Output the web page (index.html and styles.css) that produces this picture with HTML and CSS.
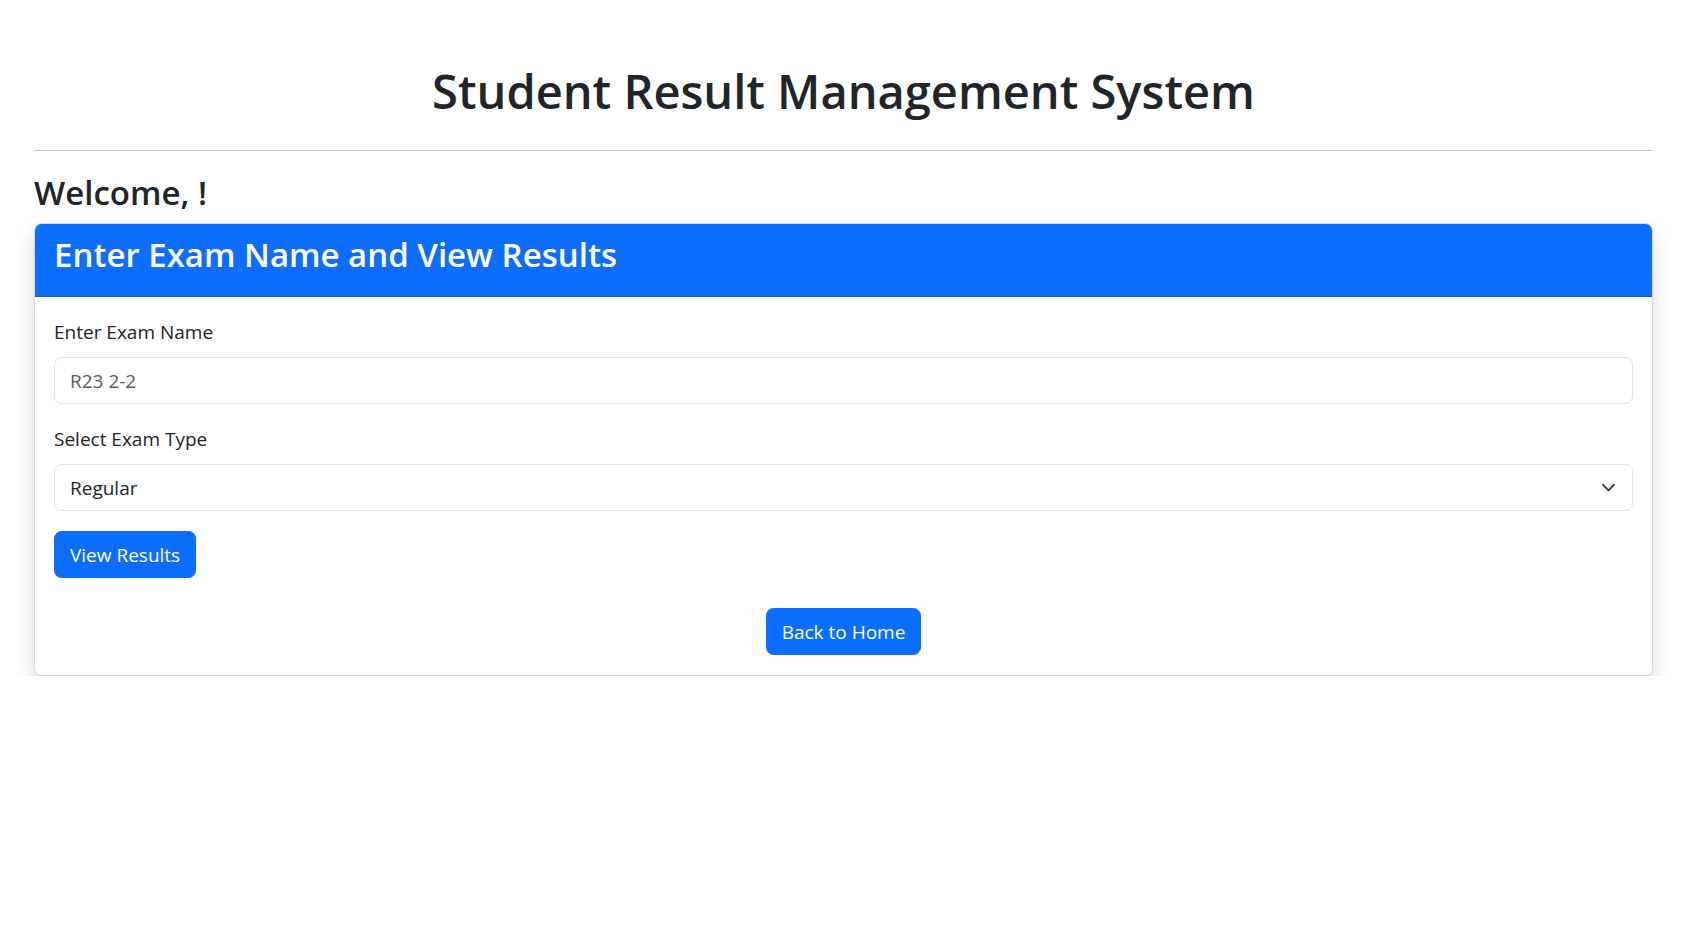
FILE: index.html
```html
<!DOCTYPE html>
<html lang="en">
<head>
<meta charset="utf-8">
<title>Student Result Management System</title>
<link rel="stylesheet" href="styles.css">
</head>
<body>
<div class="container">
  <h1 class="title">Student Result Management System</h1>
  <hr class="divider">
  <h3 class="welcome">Welcome, !</h3>
  <div class="card">
    <div class="card-header">
      <h3 class="card-title">Enter Exam Name and View Results</h3>
    </div>
    <div class="card-body">
      <form class="exam-form">
        <div class="field">
          <label class="form-label" for="exam">Enter Exam Name</label>
          <input class="form-control" id="exam" type="text" placeholder="R23 2-2">
        </div>
        <div class="field">
          <label class="form-label" for="type">Select Exam Type</label>
          <div class="select-wrap">
            <select class="form-select" id="type">
              <option>Regular</option>
              <option>Supplementary</option>
            </select>
            <svg class="chevron" viewBox="0 0 16 16" width="15" height="15" aria-hidden="true"><path d="m2 5 6 6 6-6" fill="none" stroke="#343a40" stroke-width="2" stroke-linecap="round" stroke-linejoin="round"/></svg>
          </div>
        </div>
        <div class="actions-left">
          <button type="button" class="btn">View Results</button>
        </div>
      </form>
      <div class="actions-center">
        <button type="button" class="btn">Back to Home</button>
      </div>
    </div>
  </div>
</div>
</body>
</html>
```

FILE: styles.css
```css
* { box-sizing: border-box; }
html, body { margin: 0; padding: 0; background: #fff; }
body {
  font-family: "Open Sans", "Noto Sans", sans-serif;
  font-size: 19px;
  line-height: 1.5;
  color: #212529;
}
.container {
  margin: 0 54px 0 34px;
  padding-top: 61px;
}
.title {
  margin: 0 0 10px;
  text-align: center;
  font-size: 47px;
  font-weight: 600;
  line-height: 60px;
}
.divider {
  margin: 29px 0 21px;
  border: 0;
  border-top: 1px solid #c8c9ca;
}
.welcome {
  margin: 0 0 9px;
  font-size: 33px;
  font-weight: 600;
  line-height: 42px;
}
.card {
  border: 1px solid #d6d7d8;
  border-radius: 7.5px;
  background: #fff;
  box-shadow: 0 10px 20px rgba(0,0,0,.15);
  overflow: hidden;
}
.card-header {
  background: #0d6efd;
  color: #fff;
  padding: 10px 19px;
  border-bottom: 1px solid #0b5ed7;
}
.card-title {
  margin: 0 0 10px;
  font-size: 33px;
  font-weight: 600;
  line-height: 42px;
}
.card-body {
  padding: 20px 19px 20px;
}
.field { margin-bottom: 20px; }
.form-label {
  display: block;
  margin-bottom: 10px;
  line-height: 30px;
}
.form-control, .form-select {
  display: block;
  width: 100%;
  height: 47px;
  padding: 0 15px;
  font-family: inherit;
  font-size: 19px;
  color: #212529;
  background: #fff;
  border: 1px solid #dee2e6;
  border-radius: 7.5px;
  outline: none;
}
.form-control::placeholder { color: #595c5f; opacity: 1; }
.select-wrap { position: relative; }
.form-select {
  appearance: none;
  -webkit-appearance: none;
  padding-right: 50px;
}
.chevron {
  position: absolute;
  right: 17px;
  top: 16px;
  pointer-events: none;
}
.actions-left { display: flex; }
.actions-center {
  display: flex;
  justify-content: center;
  margin-top: 30px;
}
.btn {
  height: 47px;
  padding: 0 15px;
  font-family: inherit;
  font-size: 19px;
  color: #fff;
  background: #0d6efd;
  border: 1px solid #0d6efd;
  border-radius: 7.5px;
  cursor: pointer;
}
```
